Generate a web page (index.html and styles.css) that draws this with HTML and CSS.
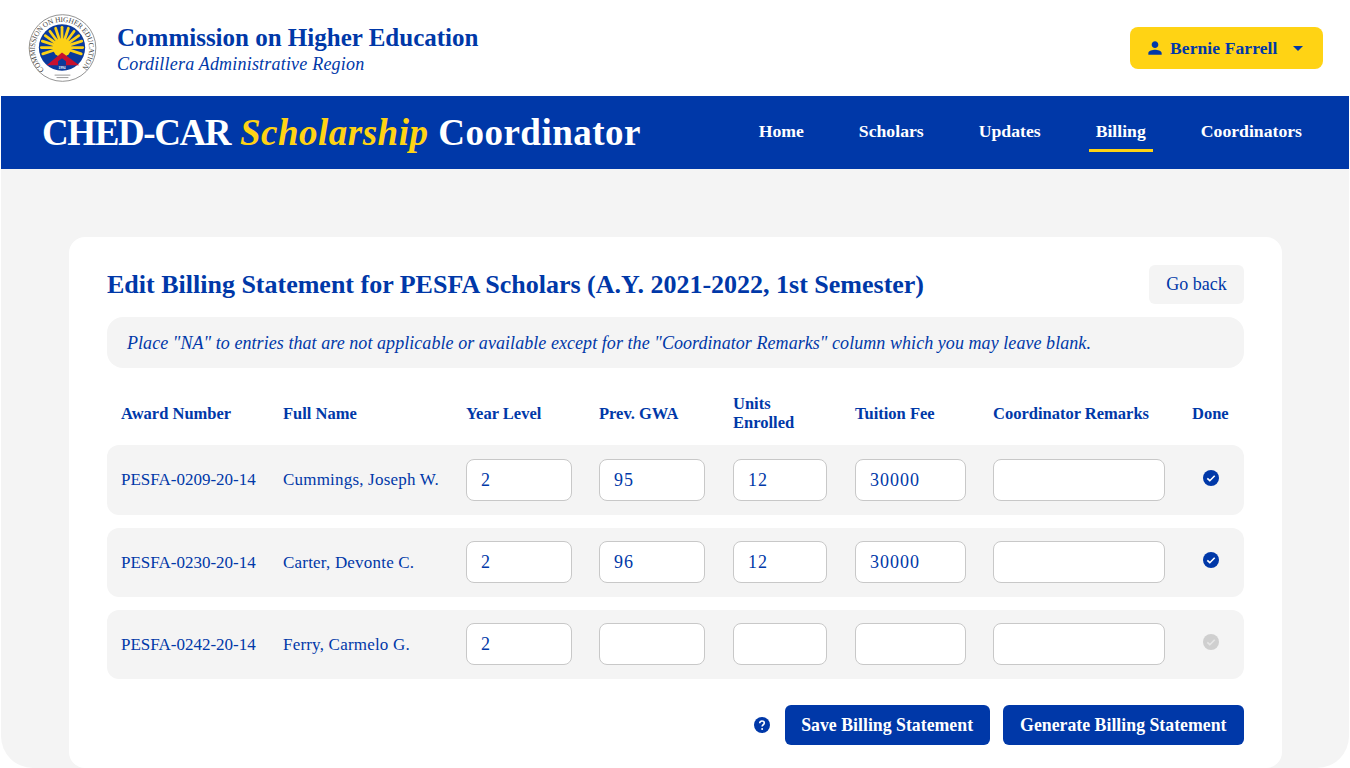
FILE: index.html
```html
<!DOCTYPE html>
<html>
<head>
    <title>CHED-CAR Scholarship Coordinator</title>
    <meta charset="utf-8">
    <link rel="stylesheet" href="styles.css">
</head>
<body>
    <div class="page">
        <header class="top">
            <div class="brand">
                <svg class="logo" viewBox="0 0 70 70">
                    <defs>
                        <path id="ring" d="M16.500 56.300 A27.500 27.500 0 1 1 52.500 56.300"/>
                    </defs>
                    <circle cx="35" cy="34.500" r="33.800" fill="#fff" stroke="#777" stroke-width="0.8"/>
                    <text class="logo-ring"><textPath href="#ring" textLength="130" lengthAdjust="spacing">COMMISSION ON HIGHER EDUCATION</textPath></text>
                    <circle cx="34.500" cy="34" r="23.500" fill="#0a3a9c"/>
                    <g stroke="#fcd116" stroke-width="2.800" stroke-linecap="round">
                        <path d="M34.500 34 L34.500 13.500"/>
                        <path d="M34.500 34 L28 14.500"/>
                        <path d="M34.500 34 L41 14.500"/>
                        <path d="M34.500 34 L22.200 17.500"/>
                        <path d="M34.500 34 L46.800 17.500"/>
                        <path d="M34.500 34 L17.500 22"/>
                        <path d="M34.500 34 L51.500 22"/>
                        <path d="M34.500 34 L14.500 27.500"/>
                        <path d="M34.500 34 L54.500 27.500"/>
                        <path d="M34.500 34 L13.500 34"/>
                        <path d="M34.500 34 L55.500 34"/>
                        <path d="M34.500 34 L15 40.500"/>
                        <path d="M34.500 34 L54 40.500"/>
                    </g>
                    <circle cx="34.500" cy="34" r="9.500" fill="#fcd116"/>
                    <path d="M19 52 L34.500 39 L52 52 Z" fill="#c8102e"/>
                    <path d="M30.500 52 V48 L34.500 45 L38.500 48 V52 Z" fill="#0a3a9c"/>
                    <text class="logo-year" x="34.500" y="55.500">1994</text>
                    <path d="M27 62 H43 M29 64.500 H41" stroke="#999" stroke-width="1"/>
                </svg>
                <div>
                    <div class="brand-name">Commission on Higher Education</div>
                    <div class="brand-sub">Cordillera Administrative Region</div>
                </div>
            </div>
            <button class="user-btn">
                <svg class="user-icon" viewBox="0 0 24 24"><path d="M12 12c2.200 0 4-1.800 4-4s-1.800-4-4-4-4 1.800-4 4 1.800 4 4 4zm0 2c-2.700 0-8 1.300-8 4v2h16v-2c0-2.700-5.300-4-8-4z"/></svg>
                <span>Bernie Farrell</span>
                <svg class="caret" viewBox="0 0 10 5"><path d="M0 0h10L5 5z"/></svg>
            </button>
        </header>

        <nav class="nav">
            <div class="nav-title"><span class="nav-org">CHED-CAR</span> <em>Scholarship</em> Coordinator</div>
            <div class="nav-links">
                <a class="nav-link">Home</a>
                <a class="nav-link">Scholars</a>
                <a class="nav-link">Updates</a>
                <a class="nav-link active">Billing</a>
                <a class="nav-link">Coordinators</a>
            </div>
        </nav>

        <main class="main">
            <section class="card">
                <div class="card-head">
                    <h1>Edit Billing Statement for PESFA Scholars (A.Y. 2021-2022, 1st Semester)</h1>
                    <button class="btn-back">Go back</button>
                </div>
                <p class="note">Place "NA" to entries that are not applicable or available except for the "Coordinator Remarks" column which you may leave blank.</p>

                <div class="grid head-row">
                    <div>Award Number</div>
                    <div>Full Name</div>
                    <div>Year Level</div>
                    <div>Prev. GWA</div>
                    <div>Units<br>Enrolled</div>
                    <div>Tuition Fee</div>
                    <div>Coordinator Remarks</div>
                    <div>Done</div>
                </div>

                <div class="rows">
                    <div class="grid row">
                        <div>PESFA-0209-20-14</div>
                        <div class="name">Cummings, Joseph W.</div>
                        <input class="field w-year" value="2">
                        <input class="field w-gwa" value="95">
                        <input class="field w-units" value="12">
                        <input class="field w-fee" value="30000">
                        <input class="field w-remarks">
                        <svg class="check" viewBox="0 0 16 16"><circle cx="8" cy="8" r="8"/><path class="tick" d="M4.300 8.300l2.500 2.400 4.900-5"/></svg>
                    </div>
                    <div class="grid row">
                        <div>PESFA-0230-20-14</div>
                        <div class="name">Carter, Devonte C.</div>
                        <input class="field w-year" value="2">
                        <input class="field w-gwa" value="96">
                        <input class="field w-units" value="12">
                        <input class="field w-fee" value="30000">
                        <input class="field w-remarks">
                        <svg class="check" viewBox="0 0 16 16"><circle cx="8" cy="8" r="8"/><path class="tick" d="M4.300 8.300l2.500 2.400 4.900-5"/></svg>
                    </div>
                    <div class="grid row">
                        <div>PESFA-0242-20-14</div>
                        <div class="name">Ferry, Carmelo G.</div>
                        <input class="field w-year" value="2">
                        <input class="field w-gwa">
                        <input class="field w-units">
                        <input class="field w-fee">
                        <input class="field w-remarks">
                        <svg class="check off" viewBox="0 0 16 16"><circle cx="8" cy="8" r="8"/><path class="tick" d="M4.300 8.300l2.500 2.400 4.900-5"/></svg>
                    </div>
                </div>

                <div class="actions">
                    <svg class="help" viewBox="0 0 16 16"><circle cx="8" cy="8" r="8"/><path d="M5.700 6.200c0-1.400 1-2.200 2.300-2.200s2.300.8 2.300 2c0 1.800-2.200 1.700-2.200 3.500" fill="none" stroke="#fff" stroke-width="1.600"/><circle cx="8.100" cy="11.900" r="1" fill="#fff"/></svg>
                    <button class="btn-primary">Save Billing Statement</button>
                    <button class="btn-primary btn-wide">Generate Billing Statement</button>
                </div>
            </section>
        </main>
    </div>
</body>
</html>
```

FILE: styles.css
```css
* {
    box-sizing: border-box;
}
body {
    margin: 0;
    background: #fff;
    color: #0038a8;
    font-family: "Liberation Serif", serif;
}
.page {
    padding: 0 1px;
}
button, input {
    font-family: inherit;
}

/* top bar */
.top {
    height: 96px;
    display: flex;
    align-items: center;
    justify-content: space-between;
    padding: 0 26px 0 27px;
}
.brand {
    display: flex;
    align-items: center;
    gap: 20px;
}
.logo {
    width: 69px;
    height: 69px;
    display: block;
}
.logo-ring {
    font-size: 7.500px;
    fill: #444;
}
.logo-year {
    font-size: 3.600px;
    font-weight: bold;
    fill: #fff;
    text-anchor: middle;
}
.brand-name {
    font-size: 25px;
    font-weight: bold;
    line-height: 30px;
    margin-top: 2px;
}
.brand-sub {
    font-size: 18px;
    font-style: italic;
    line-height: 22px;
    letter-spacing: 0.2px;
}
.user-btn {
    width: 193px;
    height: 42px;
    background: #ffd314;
    border: none;
    border-radius: 8px;
    color: #0038a8;
    display: flex;
    align-items: center;
    padding: 0 0 0 15px;
    font-size: 17.500px;
    font-weight: bold;
    letter-spacing: 0.1px;
}
.user-icon {
    width: 20px;
    height: 20px;
    fill: #0038a8;
    margin-right: 5px;
}
.caret {
    width: 10px;
    height: 5px;
    fill: #0038a8;
    margin-left: 15px;
}

/* blue nav */
.nav {
    height: 73px;
    background: #0038a8;
    display: flex;
    align-items: center;
    justify-content: space-between;
    padding: 0 40px 0 41px;
}
.nav-title {
    color: #fff;
    font-size: 37px;
    font-weight: bold;
    letter-spacing: 0.5px;
}
.nav-org {
    letter-spacing: -1.400px;
}
.nav-title em {
    color: #ffd314;
}
.nav-links {
    display: flex;
    gap: 41px;
    margin-bottom: 4px;
}
.nav-link {
    color: #fff;
    font-size: 17.700px;
    font-weight: bold;
    padding: 0 7px;
    height: 43px;
    line-height: 44px;
    border-bottom: 3px solid transparent;
}
.nav-link.active {
    border-bottom-color: #ffd314;
}

/* content */
.main {
    background: #f4f4f4;
    padding: 68px 67px 0 68px;
    border-radius: 0 0 32px 32px;
}
.card {
    background: #fff;
    border-radius: 16px;
    padding: 28px 38px 23px;
    height: 531px;
}
.card-head {
    display: flex;
    align-items: center;
    justify-content: space-between;
    height: 39px;
}
h1 {
    margin: 0;
    font-size: 26px;
    font-weight: bold;
}
.btn-back {
    width: 95px;
    height: 39px;
    background: #f4f4f4;
    border: none;
    border-radius: 6px;
    color: #0038a8;
    font-size: 18px;
}
.note {
    margin: 13px 0 0;
    height: 51px;
    line-height: 52px;
    background: #f4f4f4;
    border-radius: 16px;
    padding: 0 20px;
    font-size: 18px;
    letter-spacing: 0.06px;
    font-style: italic;
}

/* billing table */
.grid {
    display: grid;
    grid-template-columns: 162px 183px 133px 134px 122px 138px 199px 52px;
    align-items: center;
    padding-left: 14px;
}
.head-row {
    height: 77.300px;
    font-size: 16.500px;
    font-weight: bold;
    line-height: 19px;
    padding-top: 13px;
}
.rows {
    display: flex;
    flex-direction: column;
    gap: 13px;
}
.row {
    height: 69.250px;
    background: #f4f4f4;
    border-radius: 12px;
    font-size: 17px;
}
.row > div {
    padding-top: 1px;
}
.row > .name {
    letter-spacing: 0.2px;
}
.field {
    height: 42px;
    background: #fff;
    border: 1px solid #c8c8c8;
    border-radius: 8px;
    color: #0038a8;
    font-size: 18px;
    letter-spacing: 1px;
    padding: 1px 14px 0;
    outline: none;
}
.w-year, .w-gwa {
    width: 106px;
}
.w-units {
    width: 94px;
}
.w-fee {
    width: 111px;
}
.w-remarks {
    width: 172px;
}
.check {
    width: 16px;
    height: 16px;
    margin: -4px 0 0 11px;
    fill: #0038a8;
}
.check.off {
    fill: #cfcfcf;
}
.tick {
    fill: none;
    stroke: #fff;
    stroke-width: 1.600;
}
.check.off .tick {
    stroke: #e6e6e6;
}

/* buttons under the table */
.actions {
    display: flex;
    align-items: center;
    justify-content: flex-end;
    gap: 13px;
    margin-top: 26px;
}
.help {
    width: 16px;
    height: 16px;
    fill: #0038a8;
    margin-right: 2px;
}
.btn-primary {
    height: 40px;
    background: #0038a8;
    border: none;
    border-radius: 6px;
    color: #fff;
    font-size: 17.800px;
    font-weight: bold;
    padding: 0 16.500px;
}
.btn-wide {
    padding: 0 17.500px;
}
```
